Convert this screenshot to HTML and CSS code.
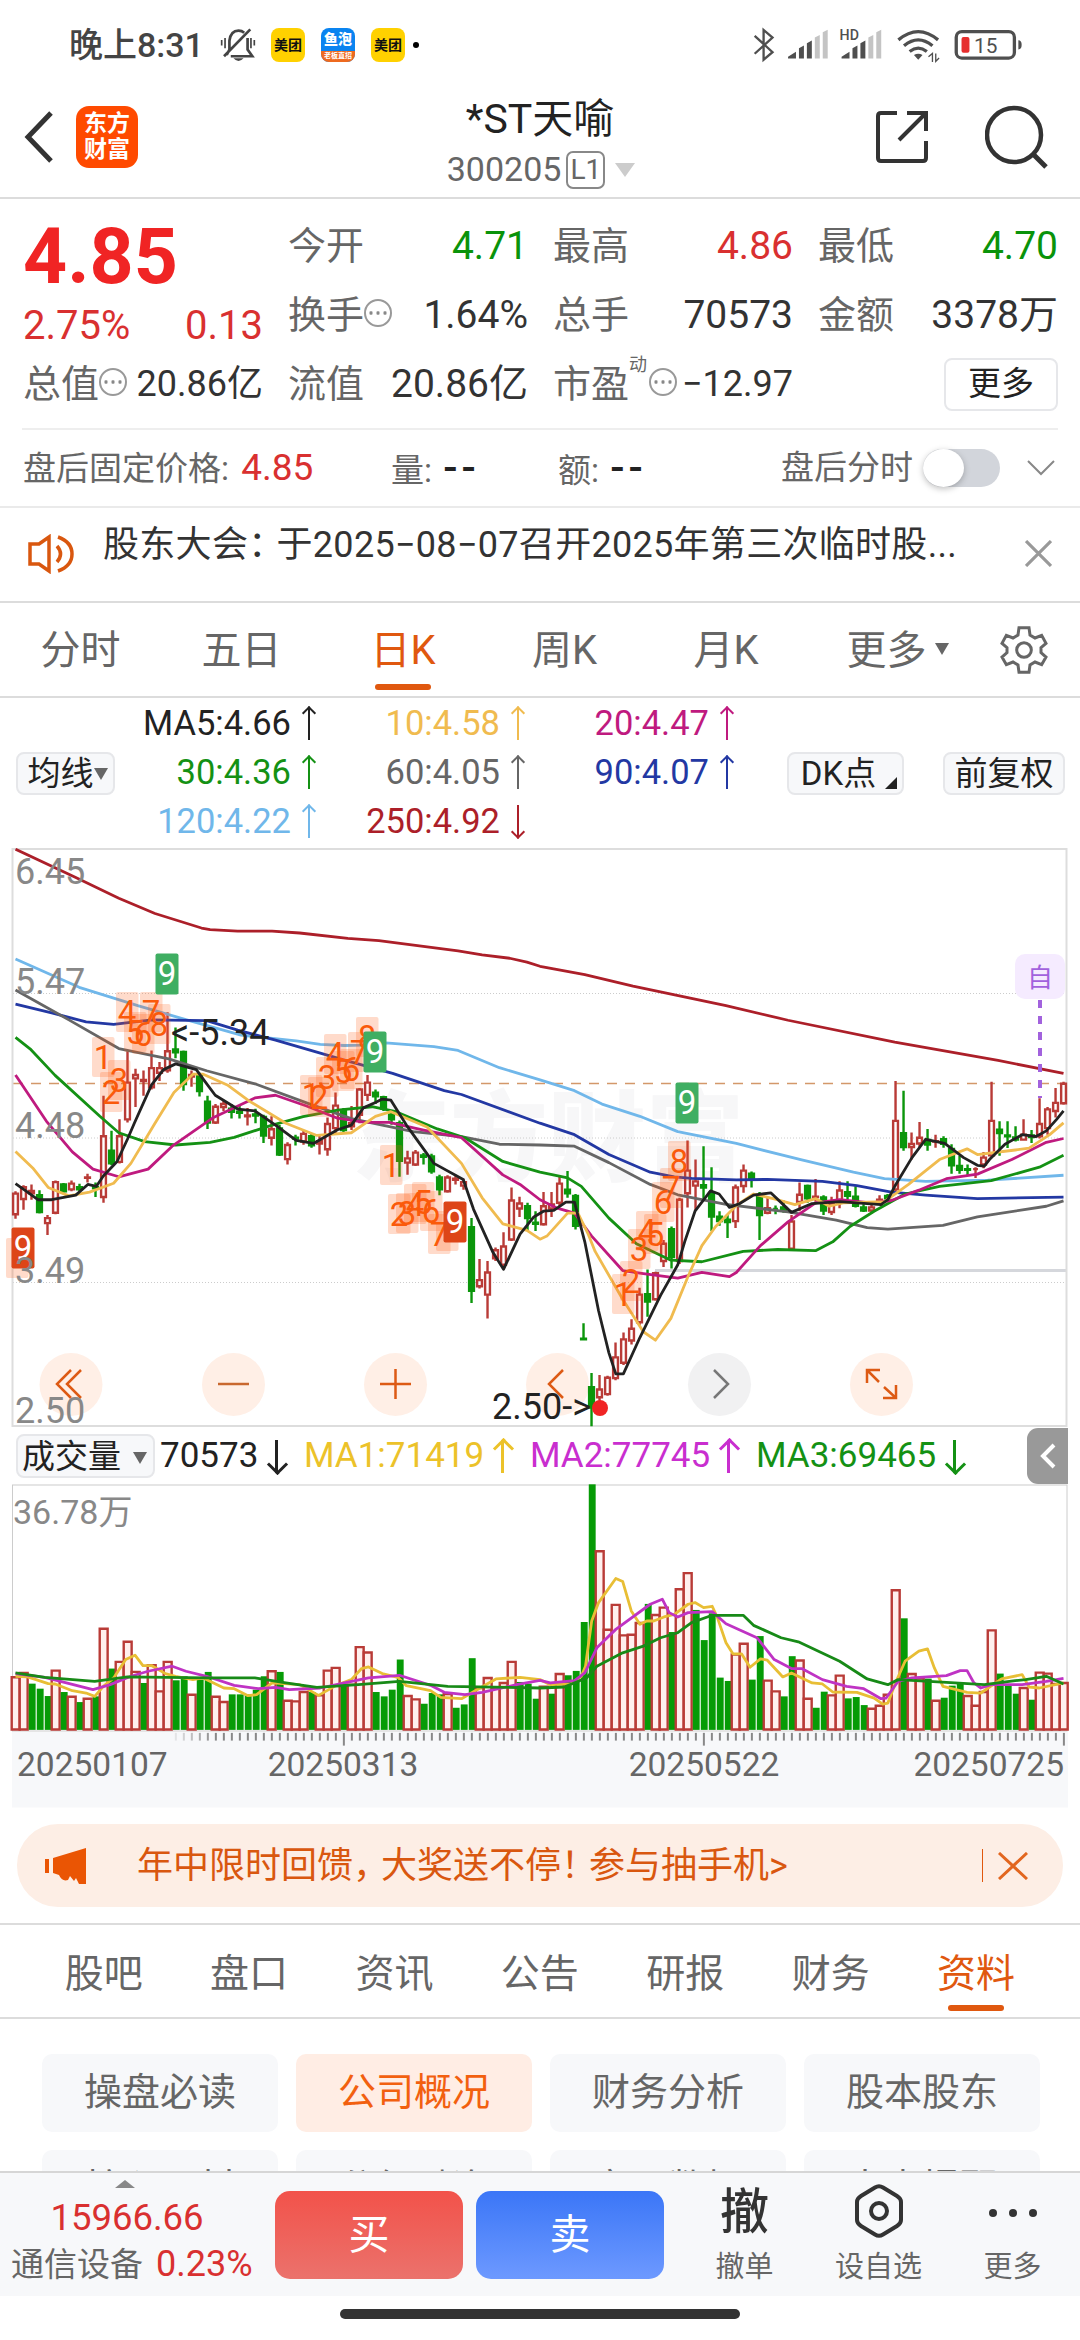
FILE: index.html
```html
<!DOCTYPE html>
<html lang="zh-CN">
<head>
  <meta charset="UTF-8">
  <title>*ST天喻 300205</title>
  <link rel="stylesheet" href="styles.css">
</head>

<body>

<div class="status-bar">
  <span class="time">晚上8:31</span>
  <svg class="bell" viewBox="480 20 110 104" fill="none" stroke="#444" stroke-width="8">
    <path d="M500 100 L508 84 V58 Q512 28 535 28 Q545 28 552 34 M562 50 V84 L576 104 H512 M492 104 L570 24"/>
    <path d="M485 56 V72 M495 50 V80 M572 50 V80 M582 56 V72" stroke-width="5"/>
    <path d="M520 110 H550 Q535 126 520 110 Z" fill="#444" stroke="none"/>
  </svg>
  <span class="app meituan">美团</span>
  <span class="app yupao"><b>鱼泡</b><i>老板直招</i></span>
  <span class="app meituan">美团</span>
  <span class="dot"></span>
  <svg class="signals" viewBox="150 15 830 115" fill="none" stroke="#4f4f4f">
    <path d="M160 45 L214 94 L187 117 V27 L214 50 L160 99" stroke-width="7"/>
    <g fill="#4f4f4f" stroke="none">
      <path d="M261 113 V108 L285 93 V113 Z M294 113 V82 L309 74 V113 Z M318 113 V67 L333 59 V113 Z"/>
      <path d="M423 113 V108 L447 93 V113 Z M456 113 V82 L471 74 V113 Z M480 113 V67 L495 59 V113 Z"/>
      <path d="M342 113 V50 L357 42 V113 Z M366 113 V34 L381 26 V113 Z M504 113 V50 L519 42 V113 Z M528 113 V34 L543 26 V113 Z" fill="#c4c4c4"/>
      <text x="417" y="57" class="hd">HD</text>
      <text x="824" y="98" class="battery-text">15</text>
      <path d="M642 103 Q655 95 668 103 L655 117 Z M958 58 Q968 58 968 72 Q968 86 958 86 Z"/>
      <rect x="786" y="48" width="24" height="48" rx="6" fill="#e62e2e"/>
    </g>
    <path d="M595 57 Q655 7 715 57 M612 75 Q655 39 698 75 M629 92 Q655 72 681 92" stroke-width="10"/>
    <path d="M686 108 L698 98 V124 M718 112 L708 122 V98" stroke-width="4"/>
    <rect x="770" y="32" width="176" height="80" rx="17" stroke-width="10"/>
  </svg>
</div>

<header>
  <svg class="back" viewBox="0 0 30 54" fill="none" stroke="#333" stroke-width="5"><path d="M27 3 L4 27 L27 51"/></svg>
  <div class="logo">东方<br>财富</div>
  <div class="title">
    <h1>*ST天喻</h1>
    <p>300205<span class="level">L1</span><span class="tri-down light"></span></p>
  </div>
  <svg class="share" viewBox="0 0 54 54" fill="none" stroke="#333" stroke-width="4">
    <path d="M22 3 H6 Q3 3 3 6 V48 Q3 51 6 51 H48 Q51 51 51 48 V31 M32 3 H51 V21 M51 3 L24 30"/>
  </svg>
  <svg class="search" viewBox="0 0 64 64" fill="none" stroke="#333" stroke-width="4.500">
    <circle cx="29" cy="30" r="27"/><path d="M48 49 L61 62" stroke-width="5"/>
  </svg>
</header>

<div class="quote">
  <div class="price">
    <b>4.85</b>
    <p><span>2.75%</span><span>0.13</span></p>
  </div>
  <div class="item"><label>今开</label><span class="green">4.71</span></div>
  <div class="item"><label>最高</label><span class="red">4.86</span></div>
  <div class="item"><label>最低</label><span class="green">4.70</span></div>
  <div class="item"><label>换手<i class="info"></i></label><span>1.64%</span></div>
  <div class="item"><label>总手</label><span>70573</span></div>
  <div class="item"><label>金额</label><span>3378万</span></div>
  <div class="item small"><label>总值<i class="info"></i></label><span>20.86亿</span></div>
  <div class="item"><label>流值</label><span>20.86亿</span></div>
  <div class="item small"><label>市盈<sup>动</sup><i class="info"></i></label><span>−12.97</span></div>
  <div class="item more"><button>更多</button></div>
</div>

<div class="after-hours">
  <span class="fixed">盘后固定价格: <em>4.85</em></span>
  <span class="amount">量: <b>--</b></span>
  <span class="amount">额: <b>--</b></span>
  <span class="switch-label">盘后分时</span>
  <span class="switch"></span>
  <svg class="chevron" viewBox="0 0 28 18" fill="none" stroke="#888" stroke-width="2"><path d="M1 2 L14 15 L27 2"/></svg>
</div>

<div class="notice">
  <svg class="speaker" viewBox="0 0 46 40" fill="none" stroke="#d9570f" stroke-width="3.500">
    <path d="M2 10 H11 L21 3 V37 L11 30 H2 Z M29 12 Q36 20 29 28 M30 3 Q44 8 44 20 Q44 32 30 37"/>
  </svg>
  <p>股东大会<span class="punct">：</span>于2025−08−07召开2025年第三次临时股...</p>
  <svg class="close" viewBox="0 0 26 26" stroke="#999" stroke-width="3"><path d="M1 1 L25 25 M25 1 L1 25"/></svg>
</div>

<nav class="periods">
  <a>分时</a>
  <a>五日</a>
  <a class="active">日K</a>
  <a>周K</a>
  <a>月K</a>
  <a>更多<span class="tri-down"></span></a>
  <svg class="gear" viewBox="54 45 150 150" fill="none" stroke="#666" stroke-width="9">
    <path d="M114 53 L144 53 L147 75 L162 84 L182 76 L195 100 L180 113 L180 128 L195 141 L182 164 L162 156 L147 165 L144 187 L114 187 L111 165 L96 156 L76 164 L63 141 L78 128 L78 113 L63 100 L76 76 L96 84 L111 75 Z"/>
    <circle cx="129" cy="120" r="22"/>
  </svg>
</nav>

<div class="ma-legend">
  <button class="ma-btn">均线<span class="tri-down"></span></button>
  <div class="ma-grid">
    <span class="c5">MA5:4.66<i class="up"></i></span>
    <span class="c10">10:4.58<i class="up"></i></span>
    <span class="c20">20:4.47<i class="up"></i></span>
    <span class="c30">30:4.36<i class="up"></i></span>
    <span class="c60">60:4.05<i class="up"></i></span>
    <span class="c90">90:4.07<i class="up"></i></span>
    <span class="c120">120:4.22<i class="up"></i></span>
    <span class="c250">250:4.92<i class="down"></i></span>
  </div>
  <button class="dk">DK点<span class="corner"></span></button>
  <button class="fq">前复权</button>
</div>

<!-- K line chart -->
<svg class="kline" viewBox="0 8 1080 580" width="1080" height="580">
  <text x="352" y="333" class="watermark">东方财富</text>
  <g class="grid-lines">
    <path d="M13 153.500 H1067 M13 298 H1067 M13 442.500 H1067"/>
  </g>
  <path d="M13 243.500 H1067" class="price-line"/>
  <path d="M655 430.500 H1066" stroke="#d5d7dc" stroke-width="3"/>
  <rect x="12.500" y="9" width="1054" height="577" fill="none" stroke="#ddd" stroke-width="2"/>
  <g id="tools"></g>
  <g transform="scale(.3444,.3827)">
    <g id="candles"></g>
    <g class="lines" id="ma-lines"></g>
  </g>
  <path d="M1040 160 V258" stroke="#a262dd" stroke-width="4" stroke-dasharray="8 8"/>
  <rect x="1015" y="114" width="50" height="45" rx="10" fill="#f5ebff"/>
  <text x="1040" y="147" class="self">自</text>
  <g id="marks"></g>
  <g class="axis">
    <text x="15" y="44">6.45</text>
    <text x="15" y="154">5.47</text>
    <text x="15" y="298">4.48</text>
    <text x="15" y="443">3.49</text>
    <text x="15" y="583">2.50</text>
  </g>
  <text x="171" y="205" class="extreme">&lt;-5.34</text>
  <text x="492" y="579" class="extreme">2.50-&gt;</text>
  <circle cx="600" cy="568" r="8" fill="#f02424"/>
</svg>

<div class="vol-legend">
  <button>成交量<span class="tri-down"></span></button>
  <span class="v0">70573<i class="down"></i></span>
  <span class="v1">MA1:71419<i class="up"></i></span>
  <span class="v2">MA2:77745<i class="up"></i></span>
  <span class="v3">MA3:69465<i class="down"></i></span>
  <div class="drawer"><svg viewBox="0 0 16 26" fill="none" stroke="#fff" stroke-width="4"><path d="M14 2 L3 13 L14 24"/></svg></div>
</div>

<!-- Volume chart -->
<svg class="volume" viewBox="0 64 1080 326" width="1080" height="326">
  <rect x="12" y="312" width="1056" height="75.500" fill="#f7f8fa"/>
  <rect x="12.500" y="65" width="1054.500" height="246" fill="#fff" stroke="#ccc"/>
  <text x="13" y="104" class="vol-max">36.78万</text>
  <g transform="scale(.3444,.335)">
    <g id="volumes"></g>
    <g class="lines" id="vol-lines"></g>
    <g id="ticks"></g>
  </g>
  <g class="dates">
    <text x="17" y="356">20250107</text>
    <text x="343" y="356" text-anchor="middle">20250313</text>
    <text x="704" y="356" text-anchor="middle">20250522</text>
    <text x="1064" y="356" text-anchor="end">20250725</text>
  </g>
</svg>

<div class="banner">
  <svg class="horn" viewBox="0 0 42 36" fill="#ea5504"><path d="M0 11 H4 V25 H0 Z M8 10 L41 0 V36 H34 L31 30 L29 33 L25 28 L23 32 Q17 34 14 27 L8 25 Z"/></svg>
  <p>年中限时回馈<span class="punct">，</span>大奖送不停<span class="punct">！</span>参与抽手机&gt;</p>
  <span class="sep"></span>
  <svg class="x" viewBox="0 0 30 28" stroke="#e2661f" stroke-width="3"><path d="M1 1 L29 27 M29 1 L1 27"/></svg>
</div>

<nav class="sections">
  <a>股吧</a>
  <a>盘口</a>
  <a>资讯</a>
  <a>公告</a>
  <a>研报</a>
  <a>财务</a>
  <a class="active">资料</a>
</nav>

<div class="cards">
  <a>操盘必读</a>
  <a class="active">公司概况</a>
  <a>财务分析</a>
  <a>股本股东</a>
  <a>核心题材</a>
  <a>分红融资</a>
  <a>交易数据</a>
  <a>大事提醒</a>
</div>

<div class="bottom-bar">
  <div class="index">
    <span class="tri-up"></span>
    <p class="value">15966.66</p>
    <p class="sector">通信设备<em>0.23%</em></p>
  </div>
  <button class="buy">买</button>
  <button class="sell">卖</button>
  <div class="action"><b>撤</b><span>撤单</span></div>
  <div class="action wide">
    <svg viewBox="0 0 48 54" fill="none" stroke="#333" stroke-width="4">
      <path d="M20 3.500 Q24 1 28 3.500 L42 12 Q46 14.500 46 18 V36 Q46 39.500 42 42 L28 50.500 Q24 53 20 50.500 L6 42 Q2 39.500 2 36 V18 Q2 14.500 6 12 Z"/>
      <circle cx="24" cy="27" r="8"/>
    </svg>
    <span>设自选</span>
  </div>
  <div class="action">
    <svg viewBox="0 0 48 54" fill="#333"><circle cx="4" cy="29" r="4"/><circle cx="24" cy="29" r="4"/><circle cx="44" cy="29" r="4"/></svg>
    <span>更多</span>
  </div>
</div>

<div class="home-bar"></div>

<script src="chart.js"></script>
</body>
</html>
```
FILE: styles.css
```css
* {
  margin: 0;
  padding: 0;
  box-sizing: border-box;
  font-family: Roboto, "Noto Sans CJK SC", sans-serif;
}

body {
  width: 1080px;
  height: 2340px;
  overflow: hidden;
  background-color: #fff;
  color: #333;
  font-size: 38px;
  line-height: 1.2;
}

button {
  border: 2px solid #e6e7ea;
  border-radius: 8px;
  background-color: #f7f8fa;
  color: #222;
  font-size: 33px;
  line-height: 37px;
}

em, i {
  font-style: normal;
}

.red { color: #d93030; }
.green { color: #0a930a; }

.tri-down {
  display: inline-block;
  border-left: 7px solid transparent;
  border-right: 7px solid transparent;
  border-top: 12px solid #666;
}

/* status bar */
.status-bar {
  height: 90px;
  padding: 0 53px 0 69px;
  display: flex;
  align-items: center;
}

.time {
  width: 135px;
  font-size: 34px;
  font-weight: 500;
  color: #444;
  white-space: nowrap;
}

.bell {
  width: 37px;
  height: 35px;
  margin-left: 16px;
}

.app {
  width: 34px;
  height: 34px;
  margin-left: 16px;
  border-radius: 8px;
  display: flex;
  justify-content: center;
  align-items: center;
  overflow: hidden;
  font-weight: 700;
}

.bell + .app {
  margin-left: 14px;
}

.meituan {
  background-color: #ffd100;
  color: #111;
  font-size: 14px;
}

.yupao {
  flex-direction: column;
  justify-content: space-between;
  background-color: #0a84f0;
  color: #fff;
}

.yupao b {
  font-size: 14px;
  line-height: 23px;
}

.yupao i {
  width: 34px;
  background-color: #ee6a1f;
  font-size: 7px;
  line-height: 11px;
  text-align: center;
}

.dot {
  width: 6px;
  height: 6px;
  margin-left: 8px;
  border-radius: 50%;
  background-color: #000;
}

.signals {
  width: 277px;
  height: 38px;
  margin-left: auto;
}

.hd {
  font-size: 43px;
  font-weight: 500;
}

.battery-text {
  font-size: 63px;
}

/* header */
header {
  height: 109px;
  padding: 0 30px 14px 24px;
  display: flex;
  align-items: center;
  border-bottom: 2px solid #dcdcdc;
}

.back {
  width: 30px;
  height: 54px;
}

.logo {
  width: 62px;
  height: 62px;
  margin-left: 22px;
  padding-top: 5px;
  border-radius: 13px;
  background-color: #ff4a00;
  color: #fff;
  font-size: 23px;
  font-weight: 700;
  line-height: 26px;
  text-align: center;
}

.title {
  width: 300px;
  margin: 12px 0 0 252px;
  text-align: center;
}

.title h1 {
  height: 54px;
  font-size: 41px;
  font-weight: 400;
  line-height: 48px;
  color: #222;
}

.title p {
  display: flex;
  justify-content: center;
  align-items: center;
  padding-left: 2px;
  font-size: 34px;
  color: #666;
}

.level {
  height: 38px;
  margin: 0 10px 0 5px;
  padding: 0 2px;
  border: 2px solid #888;
  border-radius: 7px;
  font-size: 28px;
  line-height: 34px;
}

.tri-down.light {
  border-left-width: 10px;
  border-right-width: 10px;
  border-top: 14px solid #ccc;
}

.share {
  width: 54px;
  height: 54px;
  margin-left: 185px;
}

.search {
  width: 64px;
  height: 64px;
  margin-left: 56px;
}

/* quote */
.quote {
  display: grid;
  grid-template-columns: 240px 240px 240px 240px;
  grid-template-rows: 69px 69px 69px;
  column-gap: 25px;
  height: 229px;
  padding: 13px 0 0 23px;
}

.price {
  grid-row: span 2;
  color: #d93030;
}

.price b {
  display: block;
  height: 82px;
  color: #f02424;
  font-size: 77px;
  line-height: 90px;
}

.price p {
  display: flex;
  justify-content: space-between;
  font-size: 40px;
  line-height: 64px;
}

.item {
  display: flex;
  justify-content: space-between;
  align-items: center;
  font-size: 39px;
  white-space: nowrap;
}

.item label {
  display: flex;
  align-items: center;
  position: relative;
  color: #666;
  font-size: 38px;
}

.item.small span {
  font-size: 36px;
}

.item sup {
  position: absolute;
  left: 76px;
  top: -8px;
  font-size: 18px;
}

.info {
  width: 28px;
  height: 28px;
  margin-top: -5px;
  border: 2px solid #999;
  border-radius: 50%;
  background: radial-gradient(circle, #888 1.5px, transparent 2px) 1.500px 0 / 7px 24px repeat-x;
}

.item sup + .info {
  margin-left: 20px;
}

.item.more {
  justify-content: flex-end;
}

.more button {
  width: 114px;
  height: 53px;
  padding-bottom: 2px;
  background-color: #fff;
}

/* after hours */
.after-hours {
  display: flex;
  align-items: center;
  height: 78px;
  margin: 0 22px;
  padding: 0 3px 0 1px;
  border-top: 2px solid #eee;
  font-size: 33px;
  color: #666;
}

.fixed {
  width: 368px;
}

.fixed em {
  margin-left: 4px;
  font-size: 37px;
  color: #d93030;
}

.amount {
  width: 167px;
}

.amount b {
  margin-left: 3px;
  color: #222;
  font-weight: 500;
  font-size: 42px;
  letter-spacing: 4px;
}

.switch-label {
  margin-left: 56px;
}

.switch {
  width: 77px;
  height: 38px;
  margin-left: 10px;
  border-radius: 19px;
  background-color: #d2d5db;
}

.switch::before {
  content: "";
  display: block;
  width: 41px;
  height: 38px;
  border-radius: 50%;
  background-color: #fff;
  box-shadow: 0 2px 6px rgba(0, 0, 0, 0.25);
}

.chevron {
  width: 28px;
  height: 18px;
  margin-left: auto;
}

/* notice */
.notice {
  display: flex;
  align-items: center;
  height: 97px;
  padding: 0 28px 0 27px;
  border-top: 2px solid #eaeaea;
  border-bottom: 2px solid #dcdcdc;
}

.speaker {
  width: 48px;
  height: 40px;
  margin-top: -2px;
}

.notice p {
  margin: -18px 0 0 28px;
  font-size: 36px;
  letter-spacing: 0.3px;
  white-space: nowrap;
}

.punct {
  margin-right: -8px;
}

.close {
  width: 27px;
  height: 27px;
  margin: -2px 0 0 auto;
}

/* tabs */
.periods {
  display: grid;
  grid-template-columns: 161px 161px 162px 161px 162px 181px 1fr;
  align-items: center;
  height: 95px;
  border-bottom: 2px solid #dcdcdc;
  font-size: 40px;
  color: #666;
}

.periods a {
  display: flex;
  justify-content: center;
  align-items: center;
  height: 93px;
  padding-top: 3px;
}

.periods .tri-down {
  margin: 0 0 4px 8px;
}

.periods .active,
.sections .active {
  position: relative;
  color: #e0580f;
}

.active::after {
  border-radius: 4px;
  background-color: #e0580f;
}

.periods .active::after,
.sections .active::after {
  content: "";
  position: absolute;
  bottom: 6px;
  width: 56px;
  height: 6px;
}

.gear {
  width: 50px;
  height: 50px;
  margin-left: 11px;
}

/* MA legend */
.ma-legend {
  display: flex;
  align-items: center;
  height: 150px;
  padding: 0 16px;
}

.ma-btn {
  width: 99px;
  height: 43px;
  white-space: nowrap;
}

.ma-btn .tri-down {
  margin: 0 -4px 5px 0;
}

.ma-grid {
  display: grid;
  grid-template-columns: 203px 209px 209px;
  grid-template-rows: 49px 49px 49px;
  align-items: center;
  justify-items: end;
  font-size: 34.5px;
}

.ma-grid span {
  display: flex;
  align-items: center;
}

.up, .down {
  position: relative;
  display: inline-block;
  width: 2px;
  height: 33px;
  margin: 0 8px 0 17px;
  background-color: currentColor;
}

.up::before, .down::before {
  content: "";
  position: absolute;
  left: -4px;
  top: 1px;
  width: 8px;
  height: 8px;
  border: solid currentColor;
  border-width: 2px 0 0 2px;
  transform: rotate(45deg);
}

.down::before {
  top: auto;
  bottom: 1px;
  transform: rotate(225deg);
}

.c5 { color: #222; }
.c10 { color: #f0bb4f; }
.c20 { color: #bf1a7f; }
.c30 { color: #149114; }
.c60 { color: #666; }
.c90 { color: #2338a3; }
.c120 { color: #70b7ea; }
.c250 { color: #ac1f29; }

.dk {
  position: relative;
  width: 117px;
  height: 43px;
  margin-left: 51px;
  padding-right: 14px;
}

.corner {
  position: absolute;
  right: 5px;
  bottom: 4px;
  border-left: 12px solid transparent;
  border-bottom: 12px solid #222;
}

.fq {
  width: 122px;
  height: 43px;
  margin-left: auto;
  margin-right: -1px;
}

/* charts */
.kline, .volume {
  display: block;
}

.watermark {
  font-size: 98px;
  font-weight: 900;
  fill: #f7f7f8;
}

.grid-lines {
  stroke: #ccc;
  stroke-dasharray: 1 2;
}

.price-line {
  stroke: #d3986a;
  stroke-width: 1.5;
  stroke-dasharray: 10 8;
}

.lines path {
  fill: none;
  stroke-width: 2.8;
  stroke-linejoin: round;
  vector-effect: non-scaling-stroke;
}

.rise, .fall {
  stroke: #b93b37;
  stroke-width: 2.4;
  fill: #fff;
  vector-effect: non-scaling-stroke;
}

.fall {
  stroke: #0b960b;
  fill: #0b960b;
}

#volumes .rise {
  fill: #fff0ee;
}

#volumes .fall {
  stroke: none;
  fill: #069b06;
}

#ticks path {
  stroke: #888;
  stroke-width: 2;
  vector-effect: non-scaling-stroke;
}

.axis text, .extreme {
  font-size: 36px;
  fill: #888;
}

.extreme {
  fill: #222;
}

.mark rect {
  fill: rgba(255, 90, 20, 0.22);
}

.mark text {
  font-size: 33px;
  fill: #fa5a0a;
  text-anchor: middle;
}

.mark.sell-nine rect { fill: #3fae62; }
.mark.buy-nine rect { fill: #dd4518; }

.mark.sell-nine text,
.mark.buy-nine text {
  fill: #fff;
}

.self {
  font-size: 26px;
  fill: #a262dd;
  text-anchor: middle;
}

.vol-max {
  font-size: 34px;
  fill: #888;
}

.dates text {
  font-size: 33.5px;
  fill: #666;
}

/* volume legend */
.vol-legend {
  display: flex;
  align-items: center;
  height: 56px;
  padding: 0 12px 0 16px;
  font-size: 35px;
}

.vol-legend button {
  width: 139px;
  height: 44px;
  text-align: left;
  padding-left: 4px;
  white-space: nowrap;
}

.vol-legend button .tri-down {
  margin: 0 0 4px 12px;
}

.vol-legend > span {
  display: flex;
  align-items: center;
}

.vol-legend .up, .vol-legend .down {
  width: 3px;
}

.vol-legend .up::before, .vol-legend .down::before {
  left: -5px;
  width: 12px;
  height: 12px;
  border-width: 3px 0 0 3px;
}

.v0 { width: 144px; margin-left: 5px; color: #222; }
.v1 { width: 226px; color: #ecc229; }
.v2 { width: 226px; color: #c92ecf; }
.v3 { color: #149114; }

.drawer {
  width: 41px;
  height: 56px;
  margin-left: auto;
  border-radius: 11px 0 0 11px;
  background-color: #999;
  display: flex;
  justify-content: center;
  align-items: center;
}

.drawer svg {
  width: 16px;
  height: 26px;
}

/* banner */
.banner {
  display: flex;
  align-items: center;
  height: 83px;
  margin: 14px 17px 16px;
  padding: 0 35px 0 28px;
  border-radius: 41px;
  background-color: #fdeee5;
  color: #d9570f;
  font-size: 36px;
}

.horn {
  width: 42px;
  height: 36px;
}

.banner p {
  margin: 3px 0 0 50px;
  white-space: nowrap;
}

.sep {
  width: 1px;
  height: 33px;
  margin-left: auto;
  background-color: #e0580f;
}

.banner .x {
  width: 30px;
  height: 28px;
  margin-left: 15px;
}

/* section tabs */
.sections {
  display: grid;
  grid-template-columns: repeat(7, 145.400px);
  height: 96px;
  padding-left: 31px;
  border-top: 2px solid #dcdcdc;
  border-bottom: 2px solid #dcdcdc;
  font-size: 39px;
  color: #666;
}

.sections a {
  display: flex;
  justify-content: center;
  align-items: center;
  padding-top: 6px;
}

.cards {
  display: grid;
  grid-template-columns: repeat(4, 236px);
  grid-auto-rows: 78px;
  gap: 18px;
  height: 152px;
  padding: 35px 0 0 42px;
  overflow: hidden;
  color: #666;
}

.cards a {
  display: flex;
  justify-content: center;
  align-items: center;
  border-radius: 10px;
  background-color: #f7f8fa;
}

.cards .active {
  background-color: #ffede4;
  color: #f2600f;
}

/* bottom bar */
.bottom-bar {
  display: flex;
  align-items: flex-start;
  height: 125px;
  border-top: 2px solid #d6d6d6;
  background-color: #f7f8fa;
}

.index {
  width: 275px;
  padding-left: 11px;
  color: #d93030;
}

.tri-up {
  display: block;
  width: 0;
  margin: 7px 0 0 104px;
  border-left: 10px solid transparent;
  border-right: 10px solid transparent;
  border-bottom: 8px solid #888;
}

.value {
  width: 232px;
  font-size: 36.5px;
  line-height: 60px;
  text-align: center;
}

.sector {
  font-size: 33px;
  line-height: 32px;
  color: #666;
  white-space: nowrap;
}

.sector em {
  margin-left: 13px;
  font-size: 36px;
  color: #d93030;
}

.buy, .sell {
  width: 188px;
  height: 88px;
  margin: 18px 13px 0 0;
  border: none;
  border-radius: 15px;
  background: linear-gradient(#f2524a, #eb726c);
  color: #fff;
  font-size: 41px;
}

.sell {
  background: linear-gradient(#3b76f7, #6d99ff);
}

.action {
  display: flex;
  flex-direction: column;
  align-items: center;
  width: 119px;
  padding: 11px 0 0 0;
  margin-left: 8px;
  font-size: 29px;
  color: #666;
}

.action + .action {
  margin-left: 15px;
}

.action b {
  height: 66px;
  color: #333;
  font-size: 49px;
  font-weight: 500;
}

.action svg {
  width: 48px;
  height: 54px;
  margin-bottom: 12px;
}

.home-bar {
  width: 400px;
  height: 10px;
  margin: 13px auto 0;
  border-radius: 5px;
  background-color: #333;
}
```
FILE: chart.js
```js
const STEP = 23.23;
const FIRST = 45;
const barX = i => FIRST + STEP * i;

// type, high, body top, body bottom, low
const candles = `r918,922,980,990 r902,905,940,966 r900,915,925,940 g915,926,974,976 r980,986,1003,1032 r890,892,976,978 g896,898,920,922
r890,896,915,918 g898,905,915,920 r872,880,885,895 g895,905,912,933 r668,772,935,948 g760,810,847,850 r730,772,843,845 r552,632,732,738
r598,612,625,698 r602,625,632,668 r550,594,648,652 r580,594,610,630 r450,550,604,608 g490,545,557,570 g550,552,640,655 r602,612,620,645
g608,615,658,670 g668,682,740,755 r690,695,740,742 r680,688,700,708 g690,700,712,728 g695,708,715,728 r700,718,724,746 g702,715,722,740
g718,722,774,792 r722,754,780,798 g745,752,824,826 r790,795,836,848 g770,776,782,798 r760,766,790,796 g766,772,800,804 r770,785,795,822
r725,740,810,825 r660,692,755,768 g700,705,760,768 r695,738,750,758 r648,650,720,740 r614,632,668,682 g652,658,672,690 g668,670,704,708
g708,715,732,744 g733,738,840,880 r812,830,845,875 r810,815,850,852 g818,822,830,848 g820,825,868,872 g875,880,915,928 r876,880,920,922
r875,883,890,900 r885,892,905,914 g988,1010,1180,1210 r1095,1148,1168,1172 r1100,1128,1190,1250 r1065,1070,1095,1100 r1025,1060,1112,1120
r908,940,1046,1048 r932,948,965,985 g948,955,990,1020 g970,998,1005,1022 r920,955,1006,1008 r920,950,965,985 r880,896,950,958
g865,912,925,935 g925,928,1010,1018 g1263,1303,1305,1306 g1393,1428,1485,1532 r1398,1434,1458,1465 r1400,1403,1450,1452 r1313,1350,1408,1412
r1287,1303,1368,1372 r1252,1275,1310,1318 r1170,1186,1262,1268 g1122,1185,1208,1246 r1128,1130,1202,1204 r1045,1053,1102,1116
g1010,1015,1092,1120 r935,938,1102,1108 r785,862,925,960 r835,890,905,968 g800,900,910,938 g855,920,986,1022 g970,982,998,1008
g980,990,1000,1040 r900,906,998,1014 r848,862,906,922 g866,870,890,908 g920,925,982,1045 r935,960,976,978 g955,962,966,978
g942,958,968,974 r980,995,1070,1072 r895,925,948,970 g900,902,938,948 r886,930,935,945 g928,932,970,980 r932,948,974,980
r892,914,950,962 g892,918,932,940 g905,930,958,960 g952,958,970,972 r945,958,970,976 r928,938,948,952 g925,928,938,940
r630,732,915,918 g655,764,804,812 r764,792,804,835 r737,776,795,804 g755,782,798,812 r770,785,790,804 g774,780,796,804
g795,805,852,872 g825,850,864,872 g848,858,864,876 r855,858,862,883 r815,828,850,858 r632,732,826,830 g735,755,768,825
g735,770,776,805 g748,775,785,788 r730,768,785,786 g758,770,778,792 r675,740,776,780 r698,702,755,770 r648,685,710,725 r632,635,690,692`;

const volumes = `r768 r755 g790 g805 g827 r748 g815 r826 g845 r832 g828 r623 g745 r722 r662 r752 g788 r732 r810 r722 g780 g768
r820 g778 g755 r826 r842 g822 g822 g822 g808 g768 r750 g755 r838 r840 r812 g815 r822 r748 r740 g790 r790 r678 r694 g815 g828 g808
g718 r824 r834 g850 g818 g822 r818 g862 g852 g714 r800 r770 r800 r785 r722 g785 g790 g835 r796 g820 r758 g765 g752 g606 g195
r392 r626 r552 r643 r641 r606 g552 r582 r560 g636 r505 r457 g570 g660 g580 g772 g782 r700 r668 g778 g648 r778 r810 g828 g708
r718 r832 g862 g814 r822 r763 g834 g830 g854 r862 r853 r820 r508 g595 r758 r772 g775 r838 g832 g796 g790 r824 r853 r812 r628
g760 g795 g820 r800 g838 r754 r757 r788 r785`;

const maLines = [
  ['#ac1f29', '45,24 220,98 345,152 450,192 585,230 610,234 690,238 790,238 870,243 1010,257 1100,263 1330,290 1400,300 1480,309 1530,319 1568,330 1698,352 1838,382 2108,433 2288,471 2598,528 2898,576 3088,610'],
  ['#70b7ea', '45,311 230,385 400,433 550,472 700,510 860,525 930,534 1000,537 1050,536 1120,530 1260,540 1330,550 1450,595 1568,627 1668,655 1748,690 1858,722 1968,762 2138,793 2328,836 2478,868 2568,885 2688,892 2868,889 3088,876'],
  ['#2338a3', '45,429 150,452 250,475 330,482 440,470 600,472 690,497 800,523 1000,575 1140,610 1290,655 1340,665 1568,740 1668,770 1768,822 1888,868 1958,880 2008,884 2138,888 2228,887 2388,892 2488,903 2588,920 2688,928 2838,937 3088,933'],
  ['#666', '45,392 200,470 345,545 490,572 600,603 740,637 900,690 1020,728 1200,762 1340,775 1450,795 1568,797 1668,800 1768,843 1888,900 1968,927 2108,952 2288,972 2428,993 2518,1013 2578,1017 2738,1007 2838,985 3038,957 3088,943'],
  ['#149114', '45,516 90,548 160,615 290,722 345,765 420,788 510,797 610,790 680,777 790,745 880,723 980,706 1080,697 1150,710 1270,755 1350,778 1460,840 1568,868 1648,883 1688,905 1768,988 1848,1055 1948,1098 2038,1102 2158,1075 2258,1070 2368,1073 2418,1050 2468,1010 2538,970 2628,925 2728,905 2878,890 3018,855 3088,824'],
  ['#bf1a7f', '45,614 135,735 210,815 270,860 345,880 430,860 500,800 620,725 740,674 800,667 890,695 980,727 1060,738 1130,738 1230,758 1340,778 1460,875 1510,900 1568,940 1618,962 1668,975 1718,1035 1808,1125 1868,1133 1968,1145 2038,1130 2118,1141 2138,1130 2208,1060 2288,998 2368,948 2438,940 2528,948 2588,942 2668,915 2748,885 2838,873 2938,835 3038,790 3088,780'],
  ['#f0bb4f', '45,814 95,857 140,908 200,930 260,920 330,897 380,845 450,740 505,660 560,612 590,612 660,640 720,680 830,740 920,772 1020,765 1090,722 1135,710 1240,750 1340,845 1400,935 1460,1003 1530,1020 1568,1043 1588,1035 1648,975 1678,975 1708,1030 1728,1075 1808,1200 1868,1285 1903,1307 1948,1250 1998,1140 2038,1060 2078,1010 2138,955 2188,925 2248,938 2308,953 2368,937 2408,957 2448,948 2568,945 2638,900 2728,835 2808,807 2838,822 2948,810 2988,805 3048,770 3088,739'],
  ['#222', '45,898 80,920 110,940 150,940 220,928 255,900 280,905 300,878 340,840 370,782 390,740 440,640 475,600 510,585 570,600 590,625 625,667 690,703 740,708 800,745 860,785 910,793 980,757 1020,745 1055,700 1090,686 1110,677 1135,680 1180,745 1260,845 1345,887 1375,965 1430,1075 1462,1122 1510,1030 1550,985 1578,970 1608,968 1643,946 1668,946 1698,1050 1738,1230 1768,1340 1788,1395 1810,1395 1858,1300 1918,1190 1968,1110 1988,1050 2018,970 2063,917 2088,925 2118,960 2148,950 2188,928 2238,922 2298,973 2358,950 2438,945 2558,953 2578,940 2598,905 2648,830 2688,782 2743,793 2798,830 2838,850 2858,852 2873,835 2918,795 2968,770 3008,775 3038,760 3068,730 3088,708']
];

const volLines = [
  ['#e8be35', '45,765 80,767 140,787 160,788 210,808 250,815 275,825 300,795 330,770 365,715 392,702 415,733 440,733 480,757 510,765 560,775 590,770 650,800 680,802 720,823 745,820 790,785 870,790 925,822 975,793 1020,775 1050,742 1070,737 1110,757 1155,768 1180,793 1250,808 1280,828 1340,832 1380,808 1440,773 1510,768 1568,775 1598,790 1658,788 1688,765 1700,735 1718,600 1738,545 1788,473 1808,482 1833,570 1858,610 1878,600 1898,600 1928,588 1958,580 1998,550 2018,545 2043,560 2068,556 2083,590 2108,665 2128,698 2153,698 2178,738 2208,713 2228,717 2273,767 2298,755 2358,785 2388,788 2418,812 2488,813 2538,830 2563,848 2578,845 2598,790 2628,720 2668,690 2693,683 2713,740 2738,795 2808,813 2848,815 2908,773 2968,760 2988,797 3018,800 3088,785'],
  ['#bf33c4', '45,757 130,768 270,805 320,790 380,765 430,750 500,735 540,750 600,765 680,792 750,802 800,798 840,805 930,800 1000,785 1070,770 1160,762 1250,792 1290,813 1350,820 1400,813 1500,790 1568,777 1598,785 1668,778 1698,755 1733,680 1788,625 1888,550 1923,535 1943,575 1968,588 1998,575 2068,572 2108,608 2198,650 2248,715 2298,742 2328,742 2388,775 2458,795 2508,802 2558,832 2573,830 2608,780 2648,770 2748,763 2788,748 2808,748 2828,785 2848,800 2878,790 2968,790 3038,780 3088,771'],
  ['#178a17', '45,755 130,768 275,780 370,767 600,770 740,770 830,785 920,798 1040,790 1160,780 1300,795 1568,800 1638,797 1703,770 1733,735 1808,695 1868,675 1918,650 1968,635 2008,605 2068,583 2158,583 2188,613 2268,650 2318,662 2438,720 2518,773 2578,790 2608,775 2748,783 2858,790 2948,778 2978,775 3038,765 3088,788']
];

// nine-turn marks: label, x, y
const marks = [
  ['', 17, 418], ['4', 127, 172], ['7', 151, 172], ['5', 135, 192], ['6', 143, 194], ['8', 159, 184],
  ['1', 103, 217], ['3', 119, 240], ['2', 111, 252],
  ['1', 311, 255], ['2', 319, 257], ['3', 327, 237], ['4', 335, 214], ['5', 343, 231], ['6', 351, 229], ['7', 359, 212], ['8', 367, 197],
  ['1', 391, 325], ['2', 399, 374], ['3', 407, 373], ['4', 415, 364], ['5', 423, 362], ['6', 431, 371], ['7', 439, 394], ['', 447, 391],
  ['1', 623, 454], ['2', 631, 441], ['3', 639, 409], ['4', 647, 391], ['5', 655, 394], ['6', 663, 362], ['7', 671, 348], ['8', 679, 321]
];
const nines = [['sell', 167, 134], ['sell', 375, 212], ['sell', 687, 263], ['buy', 23, 408], ['buy', 455, 382]];

function put(id, html) {
  document.getElementById(id).innerHTML = html;
}

function drawLines(list) {
  return list.map(([color, pts]) => `<path stroke="${color}" d="M${pts}"/>`).join('');
}

put('candles', candles.split(/\s+/).map((c, i) => {
  const [high, top, bottom, low] = c.slice(1).split(',').map(Number);
  const cls = c[0] === 'r' ? 'rise' : 'fall';
  const x = barX(i);
  return `<path class="${cls}" d="M${x} ${high} V${top} M${x} ${bottom} V${low} M${x - 7} ${top + 2} H${x + 7} V${bottom - 2} H${x - 7} Z"/>`;
}).join(''));

put('volumes', volumes.split(/\s+/).map((v, i) => {
  const top = Number(v.slice(1));
  const x = barX(i);
  return v[0] === 'r'
    ? `<rect class="rise" x="${x - 11}" y="${top}" width="23" height="${924 - top}"/>`
    : `<rect class="fall" x="${x - 8}" y="${top - 3}" width="20" height="${928 - top}"/>`;
}).join(''));

put('ma-lines', drawLines(maLines));
put('vol-lines', drawLines(volLines));

let ticks = '';
for (let i = 20; i < 132; i++) {
  const major = i === 41 || i === 86 || i === 131;
  const opacity = Math.min(1, (i - 19) / 6);
  ticks += `<path opacity="${opacity}" d="M${barX(i) + 1} 934 V${major ? 972 : 957}"/>`;
}
put('ticks', ticks);

put('marks', marks.map(([n, x, y]) =>
  `<g class="mark"><rect x="${x - 11}" y="${y - 20}" width="22.500" height="40" rx="2"/><text x="${x}" y="${y + 12}">${n}</text></g>`
).join('') + nines.map(([type, x, y]) =>
  `<g class="mark ${type}-nine"><rect x="${x - 11.5}" y="${y - 20.5}" width="23" height="41" rx="2"/><text x="${x}" y="${y + 11}">9</text></g>`
).join(''));

// round chart tool buttons
const tools = [
  [71, '#ffefe6', '#dd5a14', 'M71 530 L57 544 L71 558 M81 530 L67 544 L81 558'],
  [233.5, '#ffefe6', '#c9682f', 'M218 544 H249'],
  [395.5, '#ffefe6', '#dd5a14', 'M380 544 H411 M395.500 529 V559'],
  [557.5, '#ffefe6', '#dd5a14', 'M563 530 L549 544 L563 558'],
  [719.5, '#f1f1f2', '#777', 'M714 530 L728 544 L714 558'],
  [881.5, '#ffefe6', '#dd5a14', 'M867 543 V530 H880 M868 531 L879 542 M884 547 L896 558 M896 545 V558 H883']
];
put('tools', tools.map(([x, bg, color, d]) =>
  `<circle cx="${x}" cy="544.500" r="31.500" fill="${bg}"/><path d="${d}" fill="none" stroke="${color}" stroke-width="2.500"/>`
).join(''));
```
